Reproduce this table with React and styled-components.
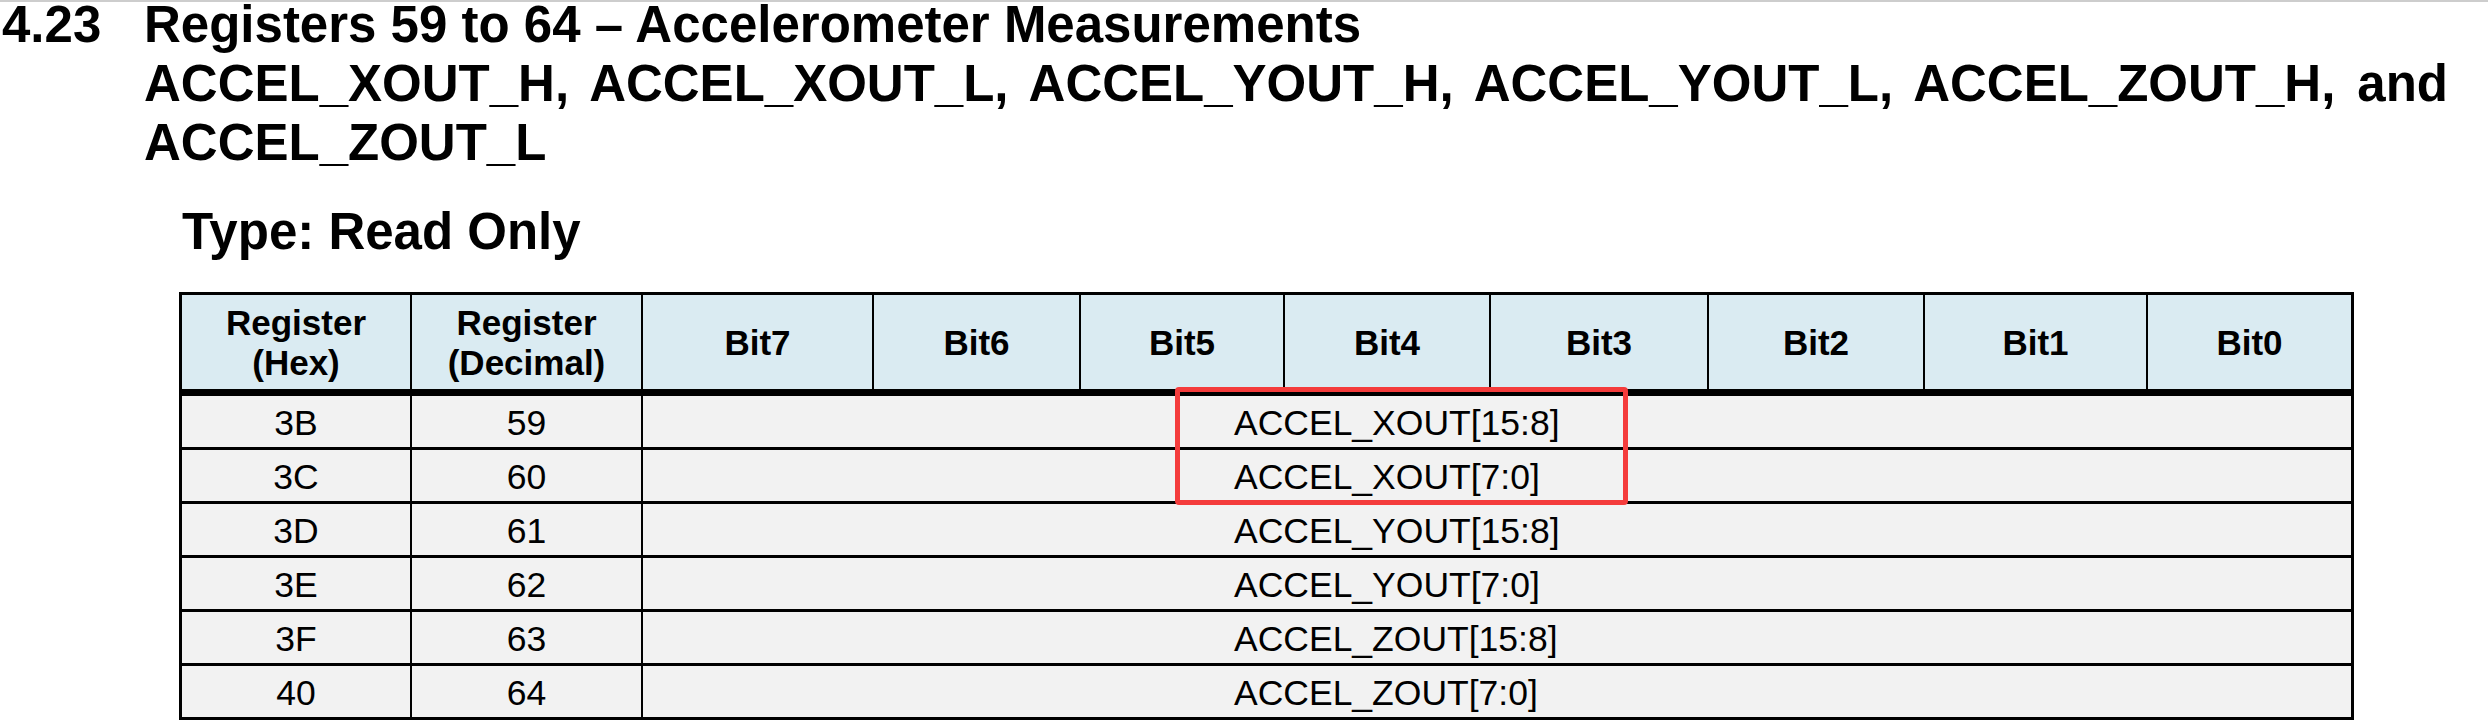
import React from "react";
import styled, { createGlobalStyle } from "styled-components";

const GlobalStyle = createGlobalStyle`
  html, body {
    margin: 0;
    padding: 0;
    background: #ffffff;
  }
  body {
    font-family: "Liberation Sans", Arial, sans-serif;
    color: #000;
    overflow: hidden;
  }
`;

const Page = styled.div`
  width: 2488px;
  height: 723px;
  display: flex;
  flex-direction: column;
`;

const TopRule = styled.div`
  height: 2px;
  background: #cdcdcd;
  flex: none;
`;

const Heading = styled.h1`
  margin: -7px 0 0 0;
  display: flex;
  font-size: 51px;
  font-weight: 700;
  line-height: 59px;
`;

const SectionNumber = styled.span`
  flex: none;
  width: 142px;
  padding-left: 2px;
`;

const TitleBlock = styled.div`
  width: 2304px;
  display: flex;
  flex-direction: column;
`;

const TitleLine = styled.span`
  display: block;
  white-space: ${(p) => (p.$justify ? "normal" : "nowrap")};
  text-align: ${(p) => (p.$justify ? "justify" : "left")};
  text-align-last: ${(p) => (p.$justify ? "justify" : "left")};
`;

const SubHeading = styled.h2`
  margin: 30px 0 0 182px;
  font-size: 51px;
  font-weight: 700;
  line-height: 59px;
`;

const TableWrap = styled.div`
  position: relative;
  margin: 31px 0 0 179px;
  width: fit-content;
`;

const Grid = styled.div`
  display: grid;
  grid-template-columns: 228px 229px 229px 205px 202px 204px 216px 214px 221px 203px;
  grid-template-rows: 98px repeat(6, 51px);
  column-gap: 2px;
  row-gap: 3px;
  padding: 3px;
  background: #000;
`;

const HeaderCell = styled.div`
  margin-bottom: 4px;
  background: #daebf2;
  display: flex;
  align-items: center;
  justify-content: center;
  text-align: center;
  font-size: 35px;
  font-weight: 700;
  line-height: 40px;
  padding-top: 2px;
`;

const BodyCell = styled.div`
  background: #f2f2f2;
  display: flex;
  align-items: center;
  justify-content: ${(p) => (p.$span ? "flex-start" : "center")};
  grid-column: ${(p) => (p.$span ? `span ${p.$span}` : "auto")};
  padding-left: ${(p) => (p.$span ? "591px" : "0")};
  padding-top: 3px;
  font-size: 35.5px;
  font-weight: 400;
  white-space: nowrap;
`;

const Highlight = styled.div`
  position: absolute;
  left: 996px;
  top: 95px;
  width: 453px;
  height: 118px;
  box-sizing: border-box;
  border: 5px solid #f43c3c;
  border-radius: 4px;
  pointer-events: none;
`;

const headers = [
  ["Register", "(Hex)"],
  ["Register", "(Decimal)"],
  ["Bit7"],
  ["Bit6"],
  ["Bit5"],
  ["Bit4"],
  ["Bit3"],
  ["Bit2"],
  ["Bit1"],
  ["Bit0"],
];

const rows = [
  ["3B", "59", "ACCEL_XOUT[15:8]"],
  ["3C", "60", "ACCEL_XOUT[7:0]"],
  ["3D", "61", "ACCEL_YOUT[15:8]"],
  ["3E", "62", "ACCEL_YOUT[7:0]"],
  ["3F", "63", "ACCEL_ZOUT[15:8]"],
  ["40", "64", "ACCEL_ZOUT[7:0]"],
];

export default function App() {
  return (
    <Page>
      <GlobalStyle />
      <TopRule />
      <Heading>
        <SectionNumber>4.23</SectionNumber>
        <TitleBlock>
          <TitleLine>Registers 59 to 64 – Accelerometer Measurements</TitleLine>
          <TitleLine $justify>
            ACCEL_XOUT_H, ACCEL_XOUT_L, ACCEL_YOUT_H, ACCEL_YOUT_L, ACCEL_ZOUT_H, and
          </TitleLine>
          <TitleLine>ACCEL_ZOUT_L</TitleLine>
        </TitleBlock>
      </Heading>
      <SubHeading>Type: Read Only</SubHeading>
      <TableWrap>
        <Grid>
          {headers.map((h, i) => (
            <HeaderCell key={i}>
              <span>
                {h.map((line, j) => (
                  <React.Fragment key={j}>
                    {j > 0 && <br />}
                    {line}
                  </React.Fragment>
                ))}
              </span>
            </HeaderCell>
          ))}
          {rows.map(([hex, dec, name]) => (
            <React.Fragment key={hex}>
              <BodyCell>{hex}</BodyCell>
              <BodyCell>{dec}</BodyCell>
              <BodyCell $span={8}>{name}</BodyCell>
            </React.Fragment>
          ))}
        </Grid>
        <Highlight />
      </TableWrap>
    </Page>
  );
}
